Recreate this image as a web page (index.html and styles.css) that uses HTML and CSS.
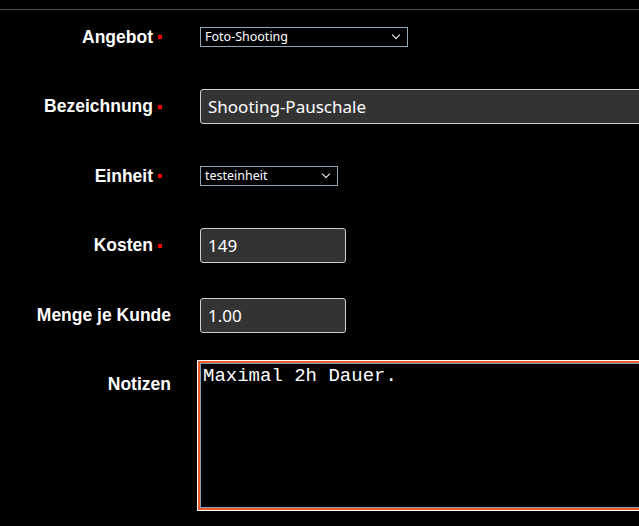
FILE: index.html
```html
<!DOCTYPE html>
<html lang="de">
<head>
  <meta charset="UTF-8">
  <meta name="viewport" content="width=device-width, initial-scale=1.0">
  <title>Leistung bearbeiten</title>
  <link rel="stylesheet" href="styles.css">
</head>
<body>
  <div class="topbar"></div>

  <form class="item-form">
    <label class="field-label required" for="angebot">Angebot</label>
    <div class="field">
      <span class="select-wrap wide">
        <select id="angebot">
          <option>Foto-Shooting</option>
        </select>
      </span>
    </div>

    <label class="field-label required" for="bezeichnung">Bezeichnung</label>
    <div class="field">
      <input type="text" id="bezeichnung" class="text-input long" value="Shooting-Pauschale">
    </div>

    <label class="field-label required" for="einheit">Einheit</label>
    <div class="field">
      <span class="select-wrap narrow">
        <select id="einheit">
          <option>testeinheit</option>
        </select>
      </span>
    </div>

    <label class="field-label required" for="kosten">Kosten</label>
    <div class="field">
      <input type="text" id="kosten" class="text-input short" value="149">
    </div>

    <label class="field-label" for="menge">Menge je Kunde</label>
    <div class="field">
      <input type="text" id="menge" class="text-input short" value="1.00">
    </div>

    <label class="field-label notes-label" for="notizen">Notizen</label>
    <div class="field notes-field">
      <textarea id="notizen" class="notes">Maximal 2h Dauer.</textarea>
    </div>
  </form>
</body>
</html>
```

FILE: styles.css
```css
:root {
  --bg: #000;
  --text: #fff;
  --line: #4d4d4d;
  --input-bg: #333;
  --input-border: #cfcfcf;
  --select-border: #8ea6b6;
  --required: #f00;
  --focus: #f05a28;
}

* {
  box-sizing: border-box;
}

html {
  overflow: hidden;
}

body {
  margin: 0;
  min-height: 100vh;
  background-color: var(--bg);
  color: var(--text);
  font-family: 'Liberation Sans', Arial, sans-serif;
}

.topbar {
  height: 10px;
  border-bottom: 1px solid var(--line);
}

.item-form {
  display: grid;
  grid-template-columns: 171px 1fr;
  grid-template-rows: 35px 35px 35px 35px 35px auto;
  column-gap: 29px;
  row-gap: 34.5px;
  padding-top: 9.5px;
}

.field-label {
  display: flex;
  align-items: center;
  justify-content: flex-end;
  font-size: 17.5px;
  font-weight: bold;
  white-space: nowrap;
}

/* red square for required fields */
.required::after {
  content: '';
  display: inline-block;
  width: 4px;
  height: 4px;
  margin-left: 5px;
  margin-right: 9px;
  background-color: var(--required);
}

.field {
  display: flex;
  align-items: center;
  min-width: 0;
}

.select-wrap {
  position: relative;
  display: inline-block;
  height: 20px;
}

.select-wrap.wide { width: 208px; }
.select-wrap.narrow { width: 138px; }

.select-wrap::after {
  content: '';
  position: absolute;
  right: 9px;
  top: 5px;
  width: 5px;
  height: 5px;
  border-right: 1.5px solid #fff;
  border-bottom: 1.5px solid #fff;
  transform: rotate(45deg);
  pointer-events: none;
}

select {
  appearance: none;
  -webkit-appearance: none;
  width: 100%;
  height: 20px;
  margin: 0;
  padding: 0 0 0 4px;
  border: 1px solid var(--select-border);
  border-radius: 0;
  background-color: var(--bg);
  color: var(--text);
  font-family: 'Noto Sans', sans-serif;
  font-size: 12.5px;
  line-height: 18px;
}

.text-input {
  height: 35px;
  margin: 0;
  padding: 0 7px;
  border: 1px solid var(--input-border);
  border-radius: 3px;
  background-color: var(--input-bg);
  color: var(--text);
  font-family: 'Noto Sans', sans-serif;
  font-size: 17px;
  outline: none;
}

.text-input.long { width: 470px; flex-shrink: 0; }
.text-input.short { width: 146px; }

.notes-label {
  align-items: flex-start;
  padding-top: 7px;
}

.notes-field {
  align-items: flex-start;
  margin-top: -4px;
}

.notes {
  width: 470px;
  height: 145px;
  flex-shrink: 0;
  margin: 0;
  padding: 1px 2px;
  border: 1px solid #7fa0b8;
  background-color: var(--bg);
  color: var(--text);
  font-family: 'Liberation Mono', 'Courier New', monospace;
  font-size: 19px;
  line-height: 22px;
  resize: none;
  outline: none;
  box-shadow: 0 0 0 2px var(--focus), 0 0 0 3px #fff;
  caret-color: #fff;
}
```
